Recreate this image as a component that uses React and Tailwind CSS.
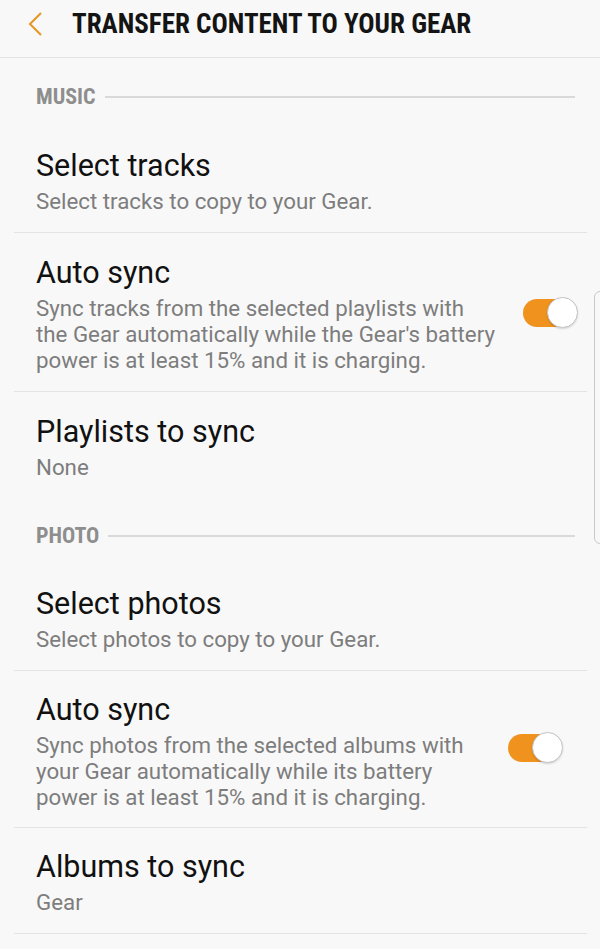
import React from 'react';

const Toggle = ({ className = '' }) => (
  <div className={`relative w-[55px] h-[32px] shrink-0 ${className}`}>
    <div className="absolute left-0 top-[2px] h-[28px] w-[46px] rounded-full bg-[#f0921e]" />
    <div className="absolute right-0 top-0 h-[31px] w-[31px] rounded-full bg-white border border-[#c4c4c4] shadow-[0_1px_2px_rgba(0,0,0,0.15)]" />
  </div>
);

const SectionHeader = ({ label, height, pad }) => (
  <div className={`flex items-center pl-[36px] pr-[25px] ${height} ${pad}`}>
    <p className="self-start font-['Roboto_Condensed','Roboto',sans-serif] font-bold text-[22px] leading-[26px] text-[#8e8e8e]">
      {label}
    </p>
    <div className="self-start mt-[12px] ml-[9px] flex-1 h-[2px] bg-[#d9d9d9]" />
  </div>
);

const Divider = () => <div className="ml-[14px] mr-[13px] h-px bg-[#e3e3e3]" />;

const Row = ({ title, sub, pad, toggle, toggleClass }) => (
  <div className={`pl-[36px] ${pad}`}>
    <p className="text-[30.5px] leading-[36px] text-[#111]">{title}</p>
    <div className="mt-[4px] flex items-start">
      <p className="flex-1 text-[22.3px] leading-[26px] text-[#7d7d7d]">{sub}</p>
      {toggle && <Toggle className={toggleClass} />}
    </div>
  </div>
);

const App = () => {
  return (
    <div className="relative w-full min-h-[949px] bg-[#f8f8f8] font-['Roboto',sans-serif] overflow-hidden">

      {/* HEADER */}
      <div className="h-[58px] flex items-start pt-[10px] border-b border-[#e2e2e2]">
        <svg className="mt-[2px] ml-[27px]" width="16" height="24" viewBox="0 0 16 24" fill="none">
          <polyline points="14,1 3,12 14,23" stroke="#e99620" strokeWidth="2" />
        </svg>
        <h1 className="ml-[29px] font-['Roboto_Condensed','Roboto',sans-serif] font-bold text-[27px] leading-[28px] text-[#141414]">
          TRANSFER CONTENT TO YOUR GEAR
        </h1>
      </div>

      {/* MUSIC */}
      <SectionHeader label="MUSIC" height="h-[68px]" pad="pt-[26px]" />

      <Row title="Select tracks" sub="Select tracks to copy to your Gear." pad="pt-[22px] pb-[18px]" />
      <Divider />
      <Row
        title="Auto sync"
        sub="Sync tracks from the selected playlists with the Gear automatically while the Gear's battery power is at least 15% and it is charging."
        pad="pt-[22px] pb-[18px]"
        toggle
        toggleClass="ml-[26px] mr-[22px] mt-[2px]"
      />
      <Divider />
      <Row title="Playlists to sync" sub="None" pad="pt-[22px] pb-[18px]" />

      {/* PHOTO */}
      <SectionHeader label="PHOTO" height="h-[66px]" pad="pt-[25px]" />

      <Row title="Select photos" sub="Select photos to copy to your Gear." pad="pt-[22px] pb-[18px]" />
      <Divider />
      <Row
        title="Auto sync"
        sub="Sync photos from the selected albums with your Gear automatically while its battery power is at least 15% and it is charging."
        pad="pt-[21px] pb-[17px]"
        toggle
        toggleClass="ml-[20px] mr-[37px]"
      />
      <Divider />
      <Row title="Albums to sync" sub="Gear" pad="pt-[21px] pb-[18px]" />
      <Divider />

      {/* scroll indicator */}
      <div className="absolute left-[594px] top-[291px] w-[14px] h-[253px] rounded-[6px] border border-[#c9c9c9]" />
    </div>
  );
};

export default App;
